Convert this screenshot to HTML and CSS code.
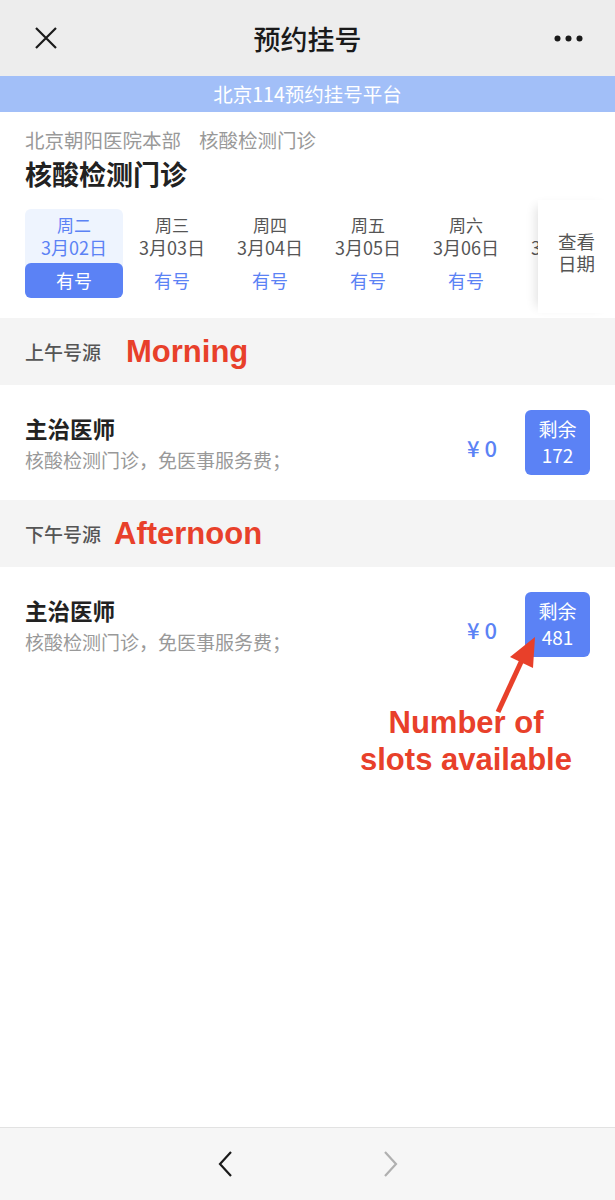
FILE: index.html
```html
<!DOCTYPE html>
<html lang="zh-CN">

<head>
    <title>预约挂号</title>
    <meta charset="UTF-8">
    <meta name="viewport" content="width=device-width, initial-scale=1">
    <link rel="stylesheet" href="styles.css">
</head>

<body>
    <header class="topbar">
        <svg class="icon-close" width="22" height="22" viewBox="0 0 22 22">
            <path d="M1 1 L21 21 M21 1 L1 21" stroke="#1a1a1a" stroke-width="2.2" fill="none" />
        </svg>
        <h1>预约挂号</h1>
        <svg class="icon-more" width="29" height="7" viewBox="0 0 29 7">
            <circle cx="3.5" cy="3.5" r="3" fill="#1a1a1a" />
            <circle cx="14.5" cy="3.5" r="3" fill="#1a1a1a" />
            <circle cx="25.5" cy="3.5" r="3" fill="#1a1a1a" />
        </svg>
    </header>
    <div class="banner">北京114预约挂号平台</div>

    <main>
        <section class="clinic">
            <p class="crumb">北京朝阳医院本部<span>核酸检测门诊</span></p>
            <h2>核酸检测门诊</h2>
            <div class="dates-wrap">
                <ul class="dates">
                    <li class="day active">
                        <span class="wk">周二</span>
                        <span class="dt">3月02日</span>
                        <span class="st">有号</span>
                    </li>
                    <li class="day">
                        <span class="wk">周三</span>
                        <span class="dt">3月03日</span>
                        <span class="st">有号</span>
                    </li>
                    <li class="day">
                        <span class="wk">周四</span>
                        <span class="dt">3月04日</span>
                        <span class="st">有号</span>
                    </li>
                    <li class="day">
                        <span class="wk">周五</span>
                        <span class="dt">3月05日</span>
                        <span class="st">有号</span>
                    </li>
                    <li class="day">
                        <span class="wk">周六</span>
                        <span class="dt">3月06日</span>
                        <span class="st">有号</span>
                    </li>
                    <li class="day">
                        <span class="wk">周日</span>
                        <span class="dt">3月07日</span>
                        <span class="st">有号</span>
                    </li>
                </ul>
                <div class="more-dates">
                    <span>查看</span>
                    <span>日期</span>
                </div>
            </div>
        </section>

        <div class="period">
            <span>上午号源</span>
            <em class="note note-morning">Morning</em>
        </div>
        <div class="slot">
            <div class="slot-info">
                <h3>主治医师</h3>
                <p>核酸检测门诊，免医事服务费；</p>
            </div>
            <div class="price">¥ 0</div>
            <div class="left">剩余<br>172</div>
        </div>

        <div class="period">
            <span>下午号源</span>
            <em class="note note-afternoon">Afternoon</em>
        </div>
        <div class="slot">
            <div class="slot-info">
                <h3>主治医师</h3>
                <p>核酸检测门诊，免医事服务费；</p>
            </div>
            <div class="price">¥ 0</div>
            <div class="left">剩余<br>481</div>
        </div>

        <div class="callout">
            <svg class="arrow" width="46" height="80" viewBox="0 0 46 80">
                <path d="M3 77 L27 25" stroke="#e8402a" stroke-width="5" fill="none" />
                <path d="M40 2 L15 22 L38 33 Z" fill="#e8402a" />
            </svg>
            <p class="note">Number of<br>slots available</p>
        </div>
    </main>

    <footer class="bottombar">
        <svg width="16" height="28" viewBox="0 0 16 28">
            <path d="M14 2 L3 14 L14 26" stroke="#1a1a1a" stroke-width="2.2" fill="none" />
        </svg>
        <svg width="16" height="28" viewBox="0 0 16 28">
            <path d="M2 2 L13 14 L2 26" stroke="#b0b0b0" stroke-width="2.2" fill="none" />
        </svg>
    </footer>
</body>

</html>
```

FILE: styles.css
```css
* {
    box-sizing: border-box;
}

body {
    margin: 0;
    min-height: 1200px;
    display: flex;
    flex-direction: column;
    background-color: #fff;
    font-family: "Noto Sans CJK SC", "Noto Sans", sans-serif;
    color: #333;
}

.topbar {
    height: 76px;
    background-color: #ededed;
    display: flex;
    align-items: center;
    justify-content: space-between;
    padding: 0 32px 0 35px;
}

.topbar h1 {
    margin: 0 0 0 4px;
    font-size: 27px;
    font-weight: 500;
    color: #1a1a1a;
}

.banner {
    height: 36px;
    line-height: 36px;
    background-color: #a2bff8;
    color: #fff;
    text-align: center;
    font-size: 19.5px;
}

main {
    flex: 1;
}

.clinic {
    padding: 15px 0 20px 25px;
}

.crumb {
    margin: 0;
    font-size: 19.5px;
    line-height: 26px;
    color: #999;
}

.crumb span {
    margin-left: 18px;
}

.clinic h2 {
    margin: 4px 0 0;
    font-size: 27px;
    line-height: 34px;
    font-weight: 700;
    color: #222;
}

.dates-wrap {
    margin-top: 18px;
    display: flex;
}

.dates {
    flex: 1;
    overflow: hidden;
    list-style: none;
    margin: 0;
    padding: 0;
    display: flex;
}

.day {
    flex: 0 0 98px;
    height: 89px;
    display: flex;
    flex-direction: column;
    align-items: center;
    font-size: 18px;
    color: #555;
    border-radius: 6px;
}

.day .wk {
    margin-top: 5px;
    line-height: 22px;
    font-size: 17px;
}

.day .dt {
    line-height: 22px;
}

.day .st {
    margin-top: 5px;
    width: 100%;
    height: 35px;
    line-height: 35px;
    text-align: center;
    color: #5b82f5;
}

.day.active {
    background-color: #eef4fe;
    color: #5b82f5;
}

.day.active .st {
    background-color: #5b82f5;
    color: #fff;
    border-radius: 6px;
}

.more-dates {
    flex: 0 0 77px;
    margin: -9px 0 -15px;
    background-color: #fff;
    box-shadow: -8px 0 10px -6px rgba(0, 0, 0, 0.12);
    display: flex;
    flex-direction: column;
    align-items: center;
    justify-content: center;
    padding-bottom: 10px;
    font-size: 18.5px;
    line-height: 22px;
    color: #555;
}

.period {
    height: 67px;
    background-color: #f4f4f4;
    display: flex;
    align-items: center;
    padding-left: 25px;
}

.period span {
    font-size: 19px;
    font-weight: 500;
    color: #555;
}

.note {
    font-family: "Liberation Sans", Arial, sans-serif;
    font-style: normal;
    font-weight: 700;
    font-size: 31px;
    color: #e8402a;
}

.note-morning {
    margin-left: 25px;
}

.note-afternoon {
    margin-left: 13px;
}

.slot {
    height: 115px;
    display: flex;
    align-items: flex-start;
    padding: 25px 25px 0 25px;
}

.slot-info {
    flex: 1;
}

.slot-info h3 {
    margin: 3px 0 0;
    font-size: 22.5px;
    line-height: 30px;
    font-weight: 700;
    color: #222;
}

.slot-info p {
    margin: 4px 0 0;
    font-size: 19px;
    line-height: 26px;
    color: #999;
}

.price {
    margin-top: 22px;
    margin-right: 28px;
    font-size: 22px;
    font-weight: 500;
    line-height: 30px;
    color: #5b82f5;
}

.left {
    width: 65px;
    height: 65px;
    border-radius: 6px;
    background-color: #5b82f5;
    color: #fff;
    text-align: center;
    font-size: 19px;
    line-height: 26px;
    padding-top: 6px;
}

.callout {
    position: relative;
    padding: 22px 0 0 336px;
}

.callout .arrow {
    position: absolute;
    left: 495px;
    top: -47px;
}

.callout .note {
    margin: 0;
    width: 260px;
    text-align: center;
    line-height: 37px;
}

.bottombar {
    height: 73px;
    background-color: #f6f6f6;
    border-top: 1px solid #e2e2e2;
    display: flex;
    align-items: center;
    justify-content: center;
    gap: 150px;
}
```
